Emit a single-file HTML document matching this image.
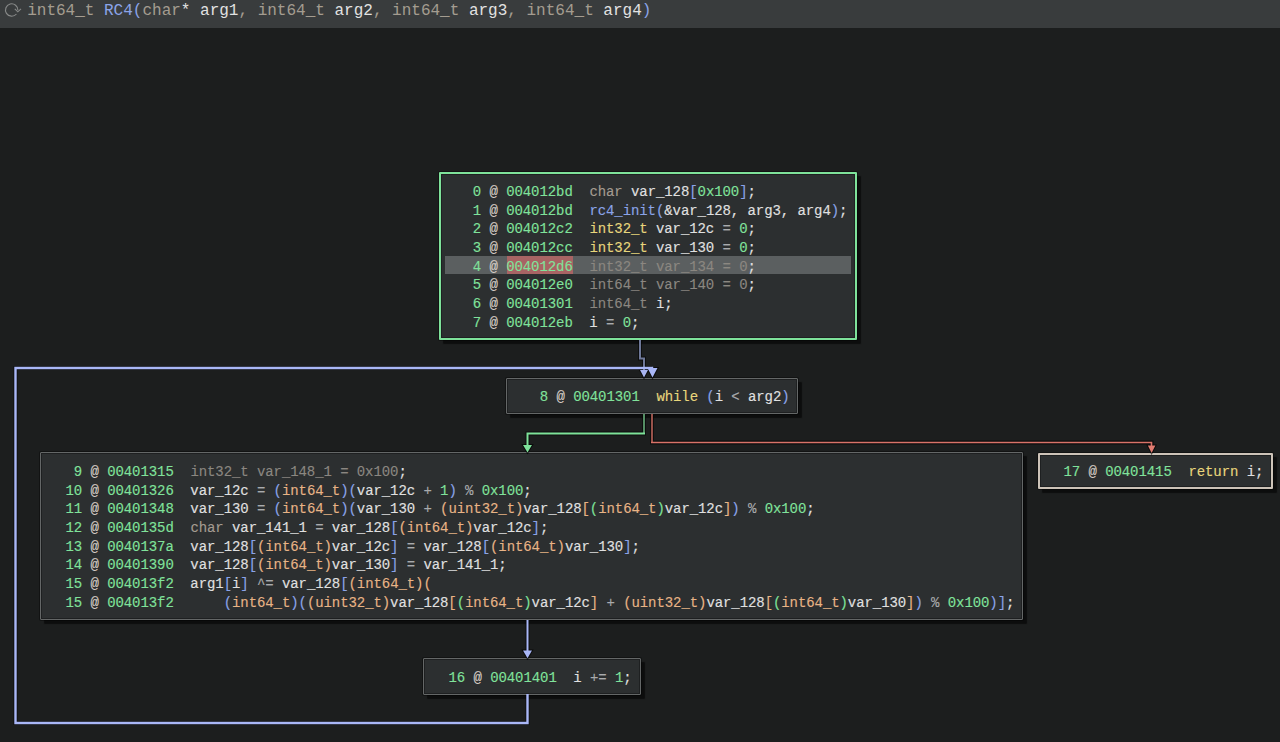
<!DOCTYPE html>
<html><head><meta charset="utf-8">
<style>
html,body{margin:0;padding:0;}
body{width:1280px;height:742px;overflow:hidden;background:#1c1e1e;position:relative;font-family:"Liberation Mono",monospace;}
#top{position:absolute;left:0;top:0;width:1280px;height:28px;background:#393c3d;}
#sig{position:absolute;left:27.2px;height:28px;line-height:28px;font-size:16px;white-space:pre;color:#e2e2e2;top:-3px;}
#edges{position:absolute;left:0;top:0;z-index:2;}
.blk{position:absolute;box-sizing:border-box;background:#2c2f30;border:1.8px solid #646767;border-radius:1px;box-shadow:inset 0 0 0 1px rgba(0,0,0,0.3),0 0 0 1px rgba(0,0,0,0.35),4px 4px 1px rgba(0,0,0,0.55);}
.lines{position:absolute;left:0;top:0;}
.ln{position:absolute;height:18.67px;line-height:18.67px;font-size:14px;letter-spacing:-0.08px;white-space:pre;color:#e0e0e0;-webkit-text-stroke:0.12px currentColor;}
.g{color:#80e29b}
.at{color:#d6cec6}
.ty{color:#a49c90}
.yl{color:#e8d67c}
.bl{color:#8ba4e8}
.or{color:#e8b486}
.gb{color:#7ee29a}
.dm{color:#8b8781}
.op{color:#a9abad}
.w{color:#e2e2e2}
</style></head>
<body>
<div id="top">
<svg style="position:absolute;left:0;top:0" width="28" height="28" viewBox="0 0 28 28">
<path d="M16.45 14 A6.2 6.2 0 1 1 17.9 10.3" fill="none" stroke="#878988" stroke-width="1.15"/>
<path d="M14.8 8.9 L17.8 11.8 L21 8.8" fill="none" stroke="#878988" stroke-width="1.15"/>
</svg>
<div id="sig"><span class="ty">int64_t</span> <span class="bl">RC4(</span><span class="ty">char</span>* arg1<span class="ty">, int64_t</span> arg2<span class="ty">, int64_t</span> arg3<span class="ty">, int64_t</span> arg4<span class="bl">)</span></div>
</div>

<svg id="edges" width="1280" height="742" viewBox="0 0 1280 742">
<g fill="none" stroke="#000" stroke-opacity="0.55" stroke-width="4" stroke-linejoin="miter">
<path d="M640 341 V358.5 H644 V370"/>
<path d="M527.5 695 V723 H15.5 V368 H652"/>
<path d="M644 415 V433.5 H527.5 V446"/>
<path d="M652 415 V442.5 H1151.5 V446"/>
<path d="M527.5 621 V651"/>
</g>
<g stroke="#000" stroke-opacity="0.6" stroke-width="2" stroke-linejoin="miter">
<polygon points="640,370 648,370 644,377.5"/>
<polygon points="647.5,368 657.5,368 652.5,377.5"/>
<polygon points="523,445 532,445 527.5,452.5"/>
<polygon points="1147.8,445.5 1155.4,445.5 1151.6,453"/>
<polygon points="523,650.5 532,650.5 527.5,658.3"/>
</g>
<!-- block0 -> while (dim) -->
<path d="M640 340 V358.5 H644 V371" fill="none" stroke="#6e7898" stroke-width="2"/>
<polygon points="640,370 648,370 644,377.5" fill="#a8b4f0"/>
<!-- loop back -->
<path d="M527.5 694 V723 H15.5 V368 H652 V370" fill="none" stroke="#a9b7f7" stroke-width="2.4"/>
<polygon points="647.5,368 657.5,368 652.5,377.5" fill="#a9b7f7"/>
<!-- while -> big (true) -->
<path d="M644 414 V433.5" fill="none" stroke="#548e64" stroke-width="2"/>
<path d="M645 433.5 H527.5 V446" fill="none" stroke="#7ee29a" stroke-width="2"/>
<polygon points="523,445 532,445 527.5,452.5" fill="#7ee29a"/>
<!-- while -> return (false) -->
<path d="M652 414 V443" fill="none" stroke="#98524a" stroke-width="2"/>
<path d="M651 442.5 H1151.5 V446" fill="none" stroke="#d87268" stroke-width="1.6"/>
<polygon points="1147.8,445.5 1155.4,445.5 1151.6,453" fill="#e07b70"/>
<!-- big -> inc -->
<path d="M527.5 620 V651" fill="none" stroke="#a9b7f7" stroke-width="2"/>
<polygon points="523,650.5 532,650.5 527.5,658.3" fill="#a9b7f7"/>
</svg>

<!-- Block 0 -->
<div class="blk" style="left:439px;top:172px;width:418px;height:168px;border:2px solid #7ee29a;"></div>
<div class="blk" style="left:506px;top:378px;width:292px;height:36px;"></div>
<div class="blk" style="left:40px;top:452.3px;width:983px;height:167.7px;"></div>
<div class="blk" style="left:1038px;top:453px;width:235px;height:36px;border:2px solid #cdc3b8;"></div>
<div class="blk" style="left:423px;top:658px;width:217.5px;height:36.5px;"></div>

<!-- highlight row -->
<div style="position:absolute;left:445px;top:255.7px;width:405.5px;height:18.4px;background:#5b5f60;"></div>
<div style="position:absolute;left:507px;top:255.7px;width:66px;height:18.4px;background:#a86464;"></div>

<div id="txt">
<div class="ln" style="left:464.50px;top:182.90px"><span class="g"> 0</span> <span class="at">@</span> <span class="g">004012bd</span>  <span class="ty">char</span> var_128<span class="bl">[</span><span class="g">0x100</span><span class="bl">]</span>;</div>
<div class="ln" style="left:464.50px;top:201.56px"><span class="g"> 1</span> <span class="at">@</span> <span class="g">004012bd</span>  <span class="bl">rc4_init(</span>&amp;var_128, arg3, arg4<span class="bl">)</span>;</div>
<div class="ln" style="left:464.50px;top:220.22px"><span class="g"> 2</span> <span class="at">@</span> <span class="g">004012c2</span>  <span class="yl">int32_t</span> var_12c <span class="op">=</span> <span class="g">0</span>;</div>
<div class="ln" style="left:464.50px;top:238.88px"><span class="g"> 3</span> <span class="at">@</span> <span class="g">004012cc</span>  <span class="yl">int32_t</span> var_130 <span class="op">=</span> <span class="g">0</span>;</div>
<div class="ln" style="left:464.50px;top:257.54px"><span class="g"> 4</span> <span class="at">@</span> <span class="g">004012d6</span>  <span class="dm">int32_t var_134 = 0</span>;</div>
<div class="ln" style="left:464.50px;top:276.20px"><span class="g"> 5</span> <span class="at">@</span> <span class="g">004012e0</span>  <span class="dm">int64_t var_140 = 0</span>;</div>
<div class="ln" style="left:464.50px;top:294.86px"><span class="g"> 6</span> <span class="at">@</span> <span class="g">00401301</span>  <span class="dm">int64_t</span> i;</div>
<div class="ln" style="left:464.50px;top:313.52px"><span class="g"> 7</span> <span class="at">@</span> <span class="g">004012eb</span>  i <span class="op">=</span> <span class="g">0</span>;</div>
<div class="ln" style="left:531.50px;top:388.30px"><span class="g"> 8</span> <span class="at">@</span> <span class="g">00401301</span>  <span class="yl">while</span> <span class="bl">(</span>i <span class="op">&lt;</span> arg2<span class="bl">)</span></div>
<div class="ln" style="left:65.50px;top:463.00px"><span class="g"> 9</span> <span class="at">@</span> <span class="g">00401315</span>  <span class="dm">int32_t var_148_1 = 0x100</span>;</div>
<div class="ln" style="left:65.50px;top:481.66px"><span class="g">10</span> <span class="at">@</span> <span class="g">00401326</span>  var_12c <span class="op">=</span> <span class="bl">(</span><span class="or">int64_t</span><span class="bl">)(</span>var_12c <span class="op">+</span> <span class="g">1</span><span class="bl">)</span> <span class="op">%</span> <span class="g">0x100</span>;</div>
<div class="ln" style="left:65.50px;top:500.32px"><span class="g">11</span> <span class="at">@</span> <span class="g">00401348</span>  var_130 <span class="op">=</span> <span class="bl">(</span><span class="or">int64_t</span><span class="bl">)(</span>var_130 <span class="op">+</span> <span class="or">(uint32_t)</span>var_128<span class="or">[</span><span class="gb">(</span><span class="or">int64_t</span><span class="gb">)</span>var_12c<span class="or">]</span><span class="bl">)</span> <span class="op">%</span> <span class="g">0x100</span>;</div>
<div class="ln" style="left:65.50px;top:518.98px"><span class="g">12</span> <span class="at">@</span> <span class="g">0040135d</span>  <span class="ty">char</span> var_141_1 <span class="op">=</span> var_128<span class="bl">[</span><span class="or">(int64_t)</span>var_12c<span class="bl">]</span>;</div>
<div class="ln" style="left:65.50px;top:537.64px"><span class="g">13</span> <span class="at">@</span> <span class="g">0040137a</span>  var_128<span class="bl">[</span><span class="or">(int64_t)</span>var_12c<span class="bl">]</span> <span class="op">=</span> var_128<span class="bl">[</span><span class="or">(int64_t)</span>var_130<span class="bl">]</span>;</div>
<div class="ln" style="left:65.50px;top:556.30px"><span class="g">14</span> <span class="at">@</span> <span class="g">00401390</span>  var_128<span class="bl">[</span><span class="or">(int64_t)</span>var_130<span class="bl">]</span> <span class="op">=</span> var_141_1;</div>
<div class="ln" style="left:65.50px;top:574.96px"><span class="g">15</span> <span class="at">@</span> <span class="g">004013f2</span>  arg1<span class="bl">[</span>i<span class="bl">]</span> <span class="op">^=</span> var_128<span class="bl">[</span><span class="or">(int64_t)(</span></div>
<div class="ln" style="left:65.50px;top:593.62px"><span class="g">15</span> <span class="at">@</span> <span class="g">004013f2</span>      <span class="bl">(</span><span class="or">int64_t</span><span class="bl">)(</span><span class="or">(uint32_t)</span>var_128<span class="or">[</span><span class="gb">(</span><span class="or">int64_t</span><span class="gb">)</span>var_12c<span class="or">]</span> <span class="op">+</span> <span class="or">(uint32_t)</span>var_128<span class="or">[</span><span class="gb">(</span><span class="or">int64_t</span><span class="gb">)</span>var_130<span class="or">]</span><span class="bl">)</span> <span class="op">%</span> <span class="g">0x100</span><span class="bl">)]</span>;</div>
<div class="ln" style="left:1063.50px;top:463.30px"><span class="g">17</span> <span class="at">@</span> <span class="g">00401415</span>  <span class="yl">return</span> i;</div>
<div class="ln" style="left:448.50px;top:669.30px"><span class="g">16</span> <span class="at">@</span> <span class="g">00401401</span>  i <span class="op">+=</span> <span class="g">1</span>;</div>
</div>
</body></html>
